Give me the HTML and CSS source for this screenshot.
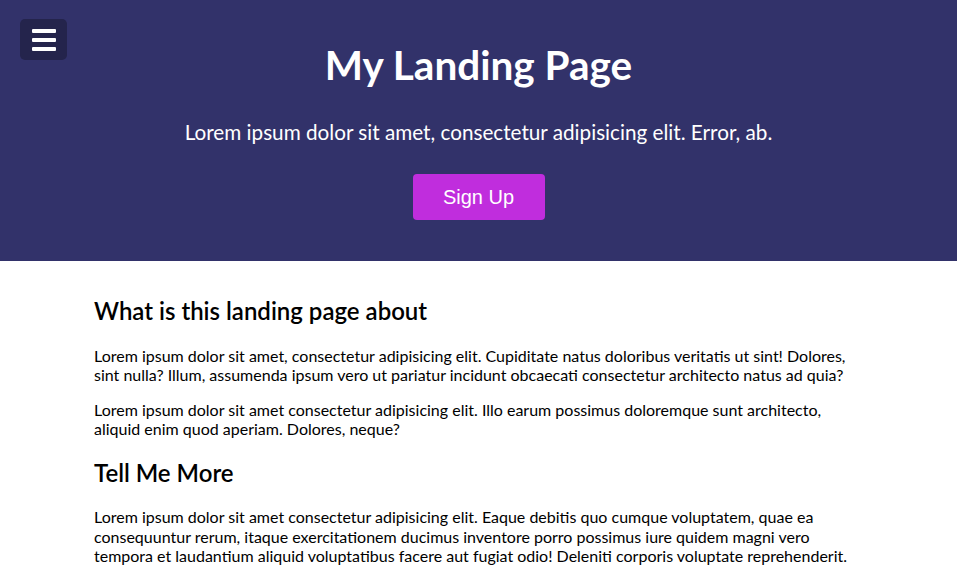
FILE: index.html
```html
<!DOCTYPE html>
<html lang="en">
<head>
<meta charset="utf-8">
<title>My Landing Page</title>
<link rel="stylesheet" href="styles.css">
</head>
<body>
<header class="hero">
  <button class="menu-btn" aria-label="Menu">
    <svg width="24" height="22" viewBox="0 0 24 22" aria-hidden="true">
      <rect x="0" y="0" width="24" height="4" rx="1" fill="#fff"/>
      <rect x="0" y="9" width="24" height="4" rx="1" fill="#fff"/>
      <rect x="0" y="18" width="24" height="4" rx="1" fill="#fff"/>
    </svg>
  </button>
  <h1 class="hero-title">My Landing Page</h1>
  <p class="hero-sub">Lorem ipsum dolor sit amet, consectetur adipisicing elit. Error, ab.</p>
  <button class="signup">Sign Up</button>
</header>
<main class="content">
  <h2>What is this landing page about</h2>
  <p>Lorem ipsum dolor sit amet, consectetur adipisicing elit. Cupiditate natus doloribus veritatis ut sint! Dolores, sint nulla? Illum, assumenda ipsum vero ut pariatur incidunt obcaecati consectetur architecto natus ad quia?</p>
  <p>Lorem ipsum dolor sit amet consectetur adipisicing elit. Illo earum possimus doloremque sunt architecto, aliquid enim quod aperiam. Dolores, neque?</p>
  <h2>Tell Me More</h2>
  <p>Lorem ipsum dolor sit amet consectetur adipisicing elit. Eaque debitis quo cumque voluptatem, quae ea consequuntur rerum, itaque exercitationem ducimus inventore porro possimus iure quidem magni vero tempora et laudantium aliquid voluptatibus facere aut fugiat odio! Deleniti corporis voluptate reprehenderit.</p>
</main>
</body>
</html>
```
FILE: styles.css
```css
* { box-sizing: border-box; }
html, body { margin: 0; padding: 0; }
body {
  font-family: "Lato", "Liberation Sans", sans-serif;
  color: #000;
  background: #fff;
}
.hero {
  position: relative;
  background: #32326a;
  color: #fff;
  display: flex;
  flex-direction: column;
  align-items: center;
  padding: 41px 16px 41px;
  gap: 31px;
}
.menu-btn {
  position: absolute;
  top: 19px;
  left: 20px;
  width: 47px;
  height: 41px;
  border: none;
  border-radius: 5px;
  background: #24244c;
  display: flex;
  align-items: center;
  justify-content: center;
  padding: 0;
  cursor: pointer;
}
.menu-btn svg { display: block; }
.hero-title {
  margin: 0;
  font-size: 40.5px;
  line-height: 48px;
  font-weight: 700;
}
.hero-sub {
  margin: 0;
  font-size: 20.7px;
  line-height: 24px;
}
.signup {
  margin-top: -1px;
  width: 132px;
  height: 46px;
  border: none;
  border-radius: 4px;
  background: #c02ddd;
  color: #fff;
  font-family: "Liberation Sans", Arial, sans-serif;
  font-size: 20px;
  cursor: pointer;
}
.content {
  max-width: 769px;
  margin: 0 auto;
  padding-top: 16px;
}
.content h2 {
  font-size: 24px;
  line-height: 1.2;
  font-weight: 600;
  margin: 20px 0;
}
.content p {
  font-size: 16px;
  line-height: 1.2;
  margin: 16px 0;
}
```
